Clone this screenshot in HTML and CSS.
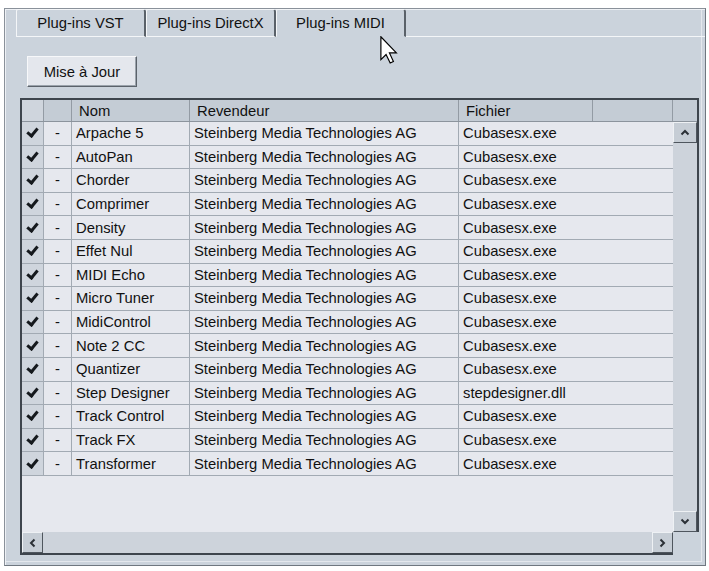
FILE: index.html
```html
<!DOCTYPE html>
<html lang="fr">
<head>
    <meta charset="UTF-8">
    <meta name="viewport" content="width=device-width, initial-scale=1.0">
    <title>Plug-ins MIDI</title>
    <link rel="stylesheet" href="styles.css">
</head>
<body>
    <div class="panel">
        <div class="tabs">
            <div class="tab">Plug-ins VST</div>
            <div class="tab">Plug-ins DirectX</div>
            <div class="tab active">Plug-ins MIDI</div>
            <div class="tab-rest"></div>
        </div>

        <div class="page">
            <button class="btn">Mise à Jour</button>

            <div class="list">
                <div class="list-top">
                    <div class="view">
                        <div class="row head">
                            <div class="c c-chk"></div>
                            <div class="c c-dash"></div>
                            <div class="c c-nom">Nom</div>
                            <div class="c c-rev">Revendeur</div>
                            <div class="c c-fic">Fichier</div>
                            <div class="c c-end"></div>
                        </div>
                        <div id="rows"></div>
                        <div class="filler"></div>
                    </div>
                    <div class="vside">
                        <div class="stub"></div>
                        <div class="vscroll">
                            <div class="sb-btn">
                                <svg width="10" height="7" viewBox="0 0 10 7"><polyline points="1.5,5.5 5,2 8.5,5.5" fill="none" stroke="#2b3036" stroke-width="2"/></svg>
                            </div>
                            <div class="track"></div>
                            <div class="sb-btn">
                                <svg width="10" height="7" viewBox="0 0 10 7"><polyline points="1.5,1.5 5,5 8.5,1.5" fill="none" stroke="#2b3036" stroke-width="2"/></svg>
                            </div>
                        </div>
                    </div>
                </div>
                <div class="list-bottom">
                    <div class="hscroll">
                        <div class="sb-btn">
                            <svg width="7" height="10" viewBox="0 0 7 10"><polyline points="5.5,1.5 2,5 5.5,8.5" fill="none" stroke="#2b3036" stroke-width="2"/></svg>
                        </div>
                        <div class="track"></div>
                        <div class="sb-btn">
                            <svg width="7" height="10" viewBox="0 0 7 10"><polyline points="1.5,1.5 5,5 1.5,8.5" fill="none" stroke="#2b3036" stroke-width="2"/></svg>
                        </div>
                    </div>
                </div>
            </div>
        </div>

        <svg class="cursor" width="18" height="28" viewBox="0 0 12 19">
            <path d="M0.5 0.5 L0.5 16 L4 12.6 L6.8 18.3 L9 17.3 L6.3 11.5 L11 11.5 Z" fill="#fff" stroke="#000" stroke-width="0.8" stroke-linejoin="miter"/>
        </svg>
    </div>

    <script>
        const plugins = [
            ["Arpache 5", "Cubasesx.exe"],
            ["AutoPan", "Cubasesx.exe"],
            ["Chorder", "Cubasesx.exe"],
            ["Comprimer", "Cubasesx.exe"],
            ["Density", "Cubasesx.exe"],
            ["Effet Nul", "Cubasesx.exe"],
            ["MIDI Echo", "Cubasesx.exe"],
            ["Micro Tuner", "Cubasesx.exe"],
            ["MidiControl", "Cubasesx.exe"],
            ["Note 2 CC", "Cubasesx.exe"],
            ["Quantizer", "Cubasesx.exe"],
            ["Step Designer", "stepdesigner.dll"],
            ["Track Control", "Cubasesx.exe"],
            ["Track FX", "Cubasesx.exe"],
            ["Transformer", "Cubasesx.exe"]
        ];

        const rows = document.getElementById("rows");
        plugins.forEach(([nom, fichier]) => {
            const row = document.createElement("div");
            row.className = "row";
            row.innerHTML =
                '<div class="c c-chk"><span class="check"></span></div>' +
                '<div class="c c-dash">-</div>' +
                '<div class="c c-nom">' + nom + '</div>' +
                '<div class="c c-rev">Steinberg Media Technologies AG</div>' +
                '<div class="c c-last">' + fichier + '</div>';
            rows.appendChild(row);
        });
    </script>
</body>
</html>
```

FILE: styles.css
```css
body {
    margin: 0;
    background: #fff;
    font-family: "Liberation Sans", Arial, sans-serif;
    font-size: 14.8px;
    color: #111;
}

.panel {
    position: relative;
    margin: 8px 0 0 4px;
    width: 702px;
    height: 558px;
    box-sizing: border-box;
    background: #cbd3dc;
    border: 1px solid #8a919a;
    border-right-color: #6f7780;
    border-bottom-color: #6f7780;
    box-shadow: inset 1px 1px 0 #eef1f5, inset -3px -3px 0 #cbd3dc, inset -4px -4px 0 #e4e8ed;
}

/* onglets */
.tabs {
    display: flex;
    height: 28px;
    padding-left: 11px;
}

.tab {
    width: 130px;
    height: 28px;
    box-sizing: border-box;
    border-top: 1px solid #f4f6f8;
    border-left: 1px solid #f4f6f8;
    border-right: 2px solid #5a6169;
    border-bottom: 1px solid #f4f6f8;
    border-radius: 2px 3px 0 0;
    display: flex;
    align-items: center;
    justify-content: center;
    padding-bottom: 1px;
}

.tab.active {
    border-bottom-color: transparent;
}

.tab-rest {
    flex: 1;
    border-bottom: 1px solid #f4f6f8;
}

/* bouton */
.btn {
    display: block;
    margin: 19px 0 0 22px;
    width: 110px;
    height: 31px;
    padding: 0;
    font: inherit;
    color: #111;
    background: #e4e7ed;
    border: 1px solid;
    border-color: #f7f8fa #5b626a #5b626a #f7f8fa;
    box-shadow: inset -1px -1px 0 #9ba3ac;
}

/* liste */
.list {
    margin: 11px 0 0 15px;
    width: 679px;
}

.list-top {
    display: flex;
    border-top: 2px solid #3e454d;
}

.view {
    width: 653px;
    height: 432px;
    box-sizing: border-box;
    border-left: 2px solid #3e454d;
    background: #e6e8ee;
    display: flex;
    flex-direction: column;
}

.row {
    display: flex;
    height: 23.6px;
    box-sizing: border-box;
    border-bottom: 1px solid #a2aab3;
}

.row.head {
    height: 22px;
    background: #c4ccd5;
    border-bottom: 1px solid #8c949d;
}

.c {
    box-sizing: border-box;
    border-right: 1px solid #a2aab3;
    padding-left: 4px;
    display: flex;
    align-items: center;
    white-space: nowrap;
    overflow: hidden;
}

.head .c {
    padding-left: 7px;
    border-right-color: #939ba4;
}

.c-chk { width: 22px; }
.c-dash { width: 28px; justify-content: center; padding-left: 0; }
.c-nom { width: 118px; }
.c-rev { width: 269px; }
.c-fic { width: 134px; }
.c-end { width: 80px; }
.c-last { width: 214px; border-right: none; }

.row .c-chk {
    background: #cfd5dd;
}

.check {
    width: 4px;
    height: 8px;
    border: solid #15191d;
    border-width: 0 3px 3px 0;
    transform: rotate(40deg);
    margin: -3px 0 0 3px;
}

.filler {
    flex: 1;
}

/* barres de défilement */
.vside {
    width: 26px;
    box-sizing: border-box;
    border-right: 2px solid #3e454d;
}

.stub {
    height: 22px;
    box-sizing: border-box;
    background: #c4ccd5;
    border-bottom: 1px solid #8c949d;
}

.vscroll {
    height: 410px;
    display: flex;
    flex-direction: column;
    background: #cdd3db;
}

.track {
    flex: 1;
}

.sb-btn {
    flex: none;
    width: 24px;
    height: 21px;
    box-sizing: border-box;
    border: 1px solid;
    border-color: #eef1f4 #4f565e #4f565e #eef1f4;
    background: #c6cdd5;
    display: flex;
    align-items: center;
    justify-content: center;
}

.list-bottom {
    display: flex;
}

.hscroll {
    width: 653px;
    height: 23px;
    box-sizing: border-box;
    border-left: 2px solid #3e454d;
    border-bottom: 2px solid #3e454d;
    background: #cdd3db;
    display: flex;
}

.hscroll .sb-btn {
    width: 21px;
}

.cursor {
    position: absolute;
    left: 375px;
    top: 27px;
}
```
